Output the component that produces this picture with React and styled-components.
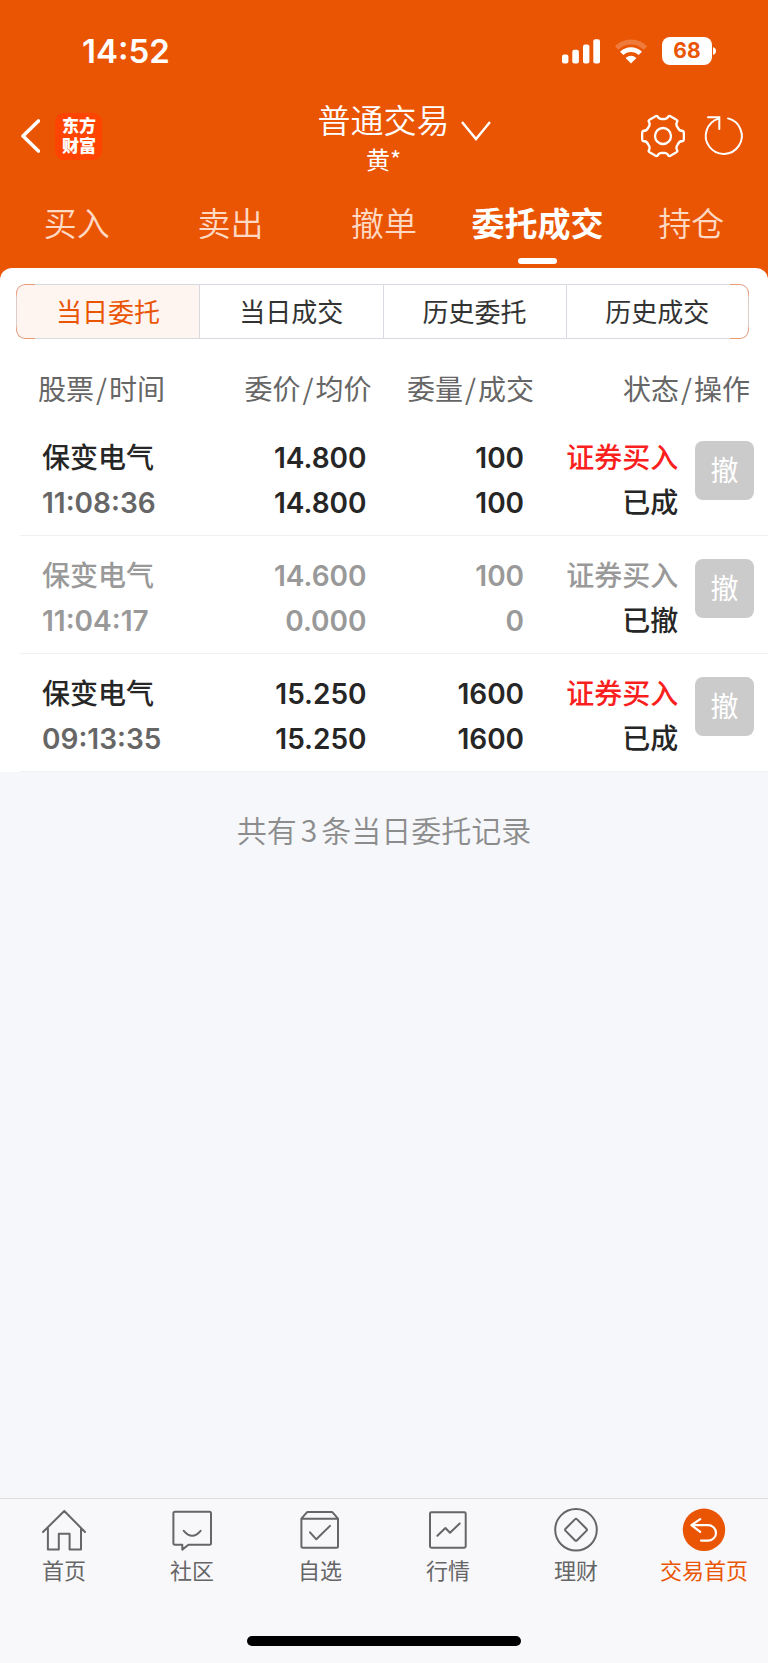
import React from "react";
import styled, { createGlobalStyle, css } from "styled-components";

const ORANGE = "#ea5504";
const cjk = `"Noto Sans CJK SC", sans-serif`;
const latin = `Inter, "Noto Sans CJK SC", sans-serif`;

const GlobalStyle = createGlobalStyle`
  *, *::before, *::after { box-sizing: border-box; }
  body { margin: 0; background: #f6f7fa; font-family: ${cjk}; color: #262626; }
  button { margin: 0; padding: 0; border: 0; background: none; font: inherit; color: inherit; cursor: pointer; }
  a { color: inherit; text-decoration: none; }
  svg { display: block; }
`;

const Screen = styled.div`
  min-height: 100vh;
  display: flex;
  flex-direction: column;
`;

const Header = styled.header`
  background: ${ORANGE};
  color: #fff;
`;

const StatusBar = styled.div`
  height: 94px;
  padding: 8px 52px 0 82px;
  display: flex;
  align-items: center;
  justify-content: space-between;
`;

const Clock = styled.time`
  font: 600 33px/40px ${latin};
`;

const StatusIcons = styled.div`
  display: flex;
  align-items: center;
  gap: 14px;
`;

const Battery = styled.div`
  display: flex;
  align-items: center;
  gap: 1px;
`;

const BatteryLevel = styled.span`
  width: 50px;
  height: 28px;
  border-radius: 8px;
  background: #fff;
  color: ${ORANGE};
  font: 700 21px/28px ${latin};
  text-align: center;
`;

const TitleBar = styled.div`
  height: 84px;
  padding: 0 22px 0 21px;
  display: grid;
  grid-template-columns: 1fr auto 1fr;
  align-items: center;
`;

const BarSide = styled.div`
  display: flex;
  align-items: center;
  justify-content: ${(p) => (p.$end ? "flex-end" : "flex-start")};
  gap: 15px;
`;

const Logo = styled.span`
  width: 47px;
  height: 47px;
  padding: 2px 6px 0 7px;
  border-radius: 9px;
  background: #ff4400;
  text-align: center;
  font: 900 17px/20px ${cjk};
`;

const Account = styled.button`
  position: relative;
  align-self: start;
  display: flex;
  flex-direction: column;
  align-items: center;
  padding-top: 3px;
`;

const AccountTitle = styled.span`
  font: 350 33px/44px ${cjk};
`;

const AccountName = styled.span`
  font: 400 24px/36px ${cjk};
`;

const Chevron = styled.svg`
  position: absolute;
  left: 100%;
  top: 26px;
  margin-left: 10px;
`;

const Tabs = styled.nav`
  display: grid;
  grid-template-columns: repeat(5, 1fr);
  padding: 22px 0 4px;
`;

const Tab = styled.a`
  display: flex;
  flex-direction: column;
  align-items: center;
  gap: 14px;
  font-size: 33px;
  line-height: 44px;
  font-weight: 350;
  color: #ffd9c4;
  &::after {
    content: "";
    width: 39px;
    height: 6px;
    border-radius: 3px;
  }
  ${(p) =>
    p.$active &&
    css`
      font-weight: 700;
      color: #fff;
      &::after { background: #fff; }
    `}
`;

const PanelBacking = styled.div`
  background: linear-gradient(${ORANGE} 24px, #fff 24px);
`;

const Panel = styled.section`
  background: #fff;
  border-radius: 12px 12px 0 0;
  padding-top: 16px;
`;

const Segments = styled.div`
  margin: 0 19px 0 16px;
  height: 55px;
  display: grid;
  grid-template-columns: repeat(4, 1fr);
`;

/* The orange tint shows only on the rounded outer corners of the group. */
const cornerTint = css`
  content: "";
  position: absolute;
  top: -1px;
  bottom: -1px;
  width: 19px;
  border: 1px solid #ee9a72;
  mask-image: linear-gradient(#000 9px, rgba(0, 0, 0, 0.2) 14px, rgba(0, 0, 0, 0.2) calc(100% - 14px), #000 calc(100% - 9px));
`;

const Segment = styled.button`
  position: relative;
  border: 1px solid #d8dae2;
  border-right-width: 0;
  padding-bottom: 3px;
  background: ${(p) => (p.$active ? "#fef5f1" : "#fff")};
  color: ${(p) => (p.$active ? ORANGE : "#333")};
  font-size: 26px;
  &:first-child { border-radius: 9px 0 0 9px; }
  &:first-child::before {
    ${cornerTint}
    left: -1px;
    border-right: 0;
    border-radius: 9px 0 0 9px;
  }
  &:last-child {
    border-right-width: 1px;
    border-radius: 0 9px 9px 0;
  }
  &:last-child::after {
    ${cornerTint}
    right: -1px;
    border-left: 0;
    border-radius: 0 9px 9px 0;
  }
`;

const TableWrap = styled.div`
  padding-left: 20px;
`;

const Orders = styled.table`
  width: 100%;
  table-layout: fixed;
  border-collapse: separate;
  border-spacing: 0;
`;

const Col = styled.col`
  width: ${(p) => p.$w};
`;

const Head = styled.th`
  padding: 29px ${(p) => p.$right || 0}px 10px ${(p) => p.$left || 0}px;
  text-align: ${(p) => (p.$left ? "left" : "right")};
  font-size: 28px;
  line-height: 40px;
  font-weight: 400;
  color: #666;
  white-space: nowrap;
`;

const Slash = styled.span`
  margin: 0 2px;
`;

const Cell = styled.td`
  padding: 17px ${(p) => p.$right || 0}px 10px ${(p) => p.$left || 0}px;
  border-bottom: 1px solid #f1f1f2;
  text-align: ${(p) => (p.$left ? "left" : "right")};
  vertical-align: top;
  white-space: nowrap;
`;

const tones = { dark: "#262626", mid: "#666", muted: "#999", red: "#fa1e1e" };

const Line = styled.div`
  height: 45px;
  font: ${(p) => (p.$number ? `600 28px/47px ${latin}` : `500 28px/42px ${cjk}`)};
  color: ${(p) => tones[p.$tone]};
`;

const CancelButton = styled.button`
  width: 59px;
  height: 59px;
  margin-top: 6px;
  padding-bottom: 4px;
  border-radius: 8px;
  background: #cbcbcb;
  color: #fff;
  font-size: 28px;
`;

const Summary = styled.p`
  margin: 0;
  padding-top: 33px;
  text-align: center;
  font-size: 30px;
  line-height: 48px;
  font-weight: 350;
  color: #8c8c8c;
`;

const Count = styled.span`
  margin: 0 4px;
`;

const Footer = styled.footer`
  margin-top: auto;
  border-top: 1px solid #dededf;
  background: #f8f8fb;
  padding: 9px 0 17px;
`;

const BottomNav = styled.nav`
  display: grid;
  grid-template-columns: repeat(6, 1fr);
`;

const NavItem = styled.a`
  display: flex;
  flex-direction: column;
  align-items: center;
  gap: 2px;
  font-size: 22px;
  line-height: 30px;
  color: ${(p) => (p.$active ? ORANGE : "#666")};
`;

const HomeIndicator = styled.div`
  width: 274px;
  height: 10px;
  margin: 52px auto 0;
  border-radius: 5px;
  background: #000;
`;

/* Six-toothed outline: each tooth is a short edge, joined by a curved dip. */
const gearPath = (() => {
  const at = (deg, r) => {
    const a = (deg * Math.PI) / 180;
    return `${(24 + r * Math.cos(a)).toFixed(2)} ${(24 + r * Math.sin(a)).toFixed(2)}`;
  };
  let d = `M${at(-14, 20.8)}`;
  for (let k = 0; k < 6; k += 1) {
    const c = k * 60;
    d += `Q${at(c - 11, 21.4)} ${at(c - 7, 21)}L${at(c + 7, 21)}Q${at(c + 11, 21.4)} ${at(c + 14, 20.8)}`;
    d += `C${at(c + 16, 17.6)} ${at(c + 23, 16.8)} ${at(c + 30, 17)}`;
    d += `C${at(c + 37, 16.8)} ${at(c + 44, 17.6)} ${at(c + 46, 20.8)}`;
  }
  return `${d}Z`;
})();

const Signal = () => (
  <svg width="38" height="25" viewBox="0 0 38 25" fill="#fff" aria-hidden="true">
    <rect x="0" y="15.5" width="6.4" height="9" rx="2" />
    <rect x="10.3" y="10.8" width="6.6" height="13.7" rx="2" />
    <rect x="21" y="5.5" width="6.4" height="19" rx="2" />
    <rect x="31.3" y="0.3" width="6.7" height="24.2" rx="2" />
  </svg>
);

const Wifi = () => (
  <svg width="34" height="25" viewBox="0 0 34 25" aria-hidden="true">
    <path d="M2.6 9A20.5 20.5 0 0 1 31.4 9" fill="none" stroke="#fff" strokeOpacity=".22" strokeWidth="5" />
    <path d="M7.7 14.4A13.2 13.2 0 0 1 26.3 14.4" fill="none" stroke="#fff" strokeWidth="4.8" />
    <path d="M17 24.4L11.6 19Q17 14.4 22.4 19Z" fill="#fff" />
  </svg>
);

const Icon = ({ children, size = 44, width = 2 }) => (
  <svg
    width={size}
    height={size}
    viewBox={`0 0 ${size} ${size}`}
    fill="none"
    stroke="currentColor"
    strokeWidth={width}
    strokeLinecap="round"
    strokeLinejoin="round"
    aria-hidden="true"
  >
    {children}
  </svg>
);

const navItems = [
  {
    label: "首页",
    icon: (
      <path d="M1 24L22.3 3L43 24M5.9 20V41.5H16.8V25.7H27.6V41.5H39V20" />
    ),
  },
  {
    label: "社区",
    icon: (
      <path d="M5 3.7H39.5Q41 3.7 41 5.2V35.2Q41 36.7 39.5 36.7H18.4L12.3 41.6V36.7H5Q3.4 36.7 3.4 35.2V5.2Q3.4 3.7 5 3.7ZM13.8 22.8Q22.2 32.8 30.6 22.8" />
    ),
  },
  {
    label: "自选",
    icon: (
      <path d="M3.4 10.7L8.4 4.9Q9 4.1 10 4.1H33.4Q34.4 4.1 35 4.9L40 10.7V38.2Q40 39.7 38.5 39.7H5Q3.4 39.7 3.4 38.2ZM3.4 10.7H40M12 24.3L18.3 31.3L32 17.9" />
    ),
  },
  {
    label: "行情",
    icon: (
      <>
        <rect x="4" y="4.2" width="35.7" height="35.5" rx="1.4" />
        <path d="M11.4 27.8L19.4 20L24 24.7L33.7 15.5" />
      </>
    ),
  },
  {
    label: "理财",
    icon: (
      <>
        <circle cx="22" cy="21.8" r="20.8" />
        <path d="M20.9 11.4Q22 10.3 23.1 11.4L32.4 20.7Q33.5 21.8 32.4 22.9L23.1 32.2Q22 33.3 20.9 32.2L11.6 22.9Q10.5 21.8 11.6 20.7Z" />
      </>
    ),
  },
  {
    label: "交易首页",
    active: true,
    icon: (
      <>
        <circle cx="22" cy="21.8" r="21.2" fill={ORANGE} stroke="none" />
        <path d="M18.2 11.2L9.4 17.2L18.2 23.8M9.6 17.2H26.3A7.7 7.7 0 0 1 26.3 32.6H19" stroke="#fff" strokeWidth="2.2" />
      </>
    ),
  },
];

const tabs = ["买入", "卖出", "撤单", "委托成交", "持仓"];
const segments = ["当日委托", "当日成交", "历史委托", "历史成交"];
const orders = [
  { name: "保变电气", time: "11:08:36", price: "14.800", avg: "14.800", qty: "100", filled: "100", side: "证券买入", state: "已成" },
  { name: "保变电气", time: "11:04:17", price: "14.600", avg: "0.000", qty: "100", filled: "0", side: "证券买入", state: "已撤", cancelled: true },
  { name: "保变电气", time: "09:13:35", price: "15.250", avg: "15.250", qty: "1600", filled: "1600", side: "证券买入", state: "已成" },
];

const OrderRow = ({ order }) => {
  const tone = order.cancelled ? "muted" : "dark";
  return (
    <tr>
      <Cell $left={22}>
        <Line $tone={tone}>{order.name}</Line>
        <Line $number $tone={order.cancelled ? "muted" : "mid"}>{order.time}</Line>
      </Cell>
      <Cell $right={5}>
        <Line $number $tone={tone}>{order.price}</Line>
        <Line $number $tone={tone}>{order.avg}</Line>
      </Cell>
      <Cell $right={12}>
        <Line $number $tone={tone}>{order.qty}</Line>
        <Line $number $tone={tone}>{order.filled}</Line>
      </Cell>
      <Cell>
        <Line $tone={order.cancelled ? "muted" : "red"}>{order.side}</Line>
        <Line $tone="dark">{order.state}</Line>
      </Cell>
      <Cell $right={14}>
        <CancelButton type="button">撤</CancelButton>
      </Cell>
    </tr>
  );
};

export default function App() {
  return (
    <Screen>
      <GlobalStyle />
      <Header>
        <StatusBar>
          <Clock>14:52</Clock>
          <StatusIcons>
            <Signal />
            <Wifi />
            <Battery>
              <BatteryLevel>68</BatteryLevel>
              <svg width="3" height="8" viewBox="0 0 3 8" aria-hidden="true">
                <path d="M0 0Q3 1.2 3 4T0 8Z" fill="#fff" />
              </svg>
            </Battery>
          </StatusIcons>
        </StatusBar>
        <TitleBar>
          <BarSide>
            <button type="button" aria-label="返回">
              <svg width="19" height="34" viewBox="0 0 19 34" fill="none" stroke="#fff" strokeWidth="3.6" strokeLinecap="round" strokeLinejoin="round">
                <path d="M17.4 2L2 17L17.4 32" />
              </svg>
            </button>
            <Logo>东方财富</Logo>
          </BarSide>
          <Account type="button">
            <AccountTitle>普通交易</AccountTitle>
            <AccountName>黄*</AccountName>
            <Chevron width="32" height="22" viewBox="0 0 32 22" fill="none" stroke="#fff" strokeWidth="2.4" aria-hidden="true">
              <path d="M2 2L16 19L30 2" />
            </Chevron>
          </Account>
          <BarSide $end>
            <button type="button" aria-label="设置">
              <Icon size={48} width={2.3}>
                <path d={gearPath} />
                <circle cx="24" cy="24" r="8" />
              </Icon>
            </button>
            <button type="button" aria-label="刷新">
              <Icon>
                <path d="M26 4.4A18 18 0 1 1 16.8 4.6M6 3.2H17.3V15" strokeLinejoin="miter" />
              </Icon>
            </button>
          </BarSide>
        </TitleBar>
        <Tabs>
          {tabs.map((t) => (
            <Tab key={t} href="#" $active={t === "委托成交"}>{t}</Tab>
          ))}
        </Tabs>
      </Header>
      <main>
        <PanelBacking>
          <Panel>
            <Segments>
              {segments.map((s, i) => (
                <Segment key={s} type="button" $active={i === 0}>{s}</Segment>
              ))}
            </Segments>
            <TableWrap>
              <Orders>
                <colgroup>
                  <Col $w="28%" />
                  <Col $w="19%" />
                  <Col $w="22%" />
                  <Col $w="19%" />
                  <Col $w="12%" />
                </colgroup>
                <thead>
                  <tr>
                    <Head scope="col" $left={18}>股票<Slash>/</Slash>时间</Head>
                    <Head scope="col">委价<Slash>/</Slash>均价</Head>
                    <Head scope="col" $right={2}>委量<Slash>/</Slash>成交</Head>
                    <Head scope="col" colSpan={2} $right={18}>状态<Slash>/</Slash>操作</Head>
                  </tr>
                </thead>
                <tbody>
                  {orders.map((o) => (
                    <OrderRow key={o.time} order={o} />
                  ))}
                </tbody>
              </Orders>
            </TableWrap>
          </Panel>
        </PanelBacking>
        <Summary>共有<Count>3</Count>条当日委托记录</Summary>
      </main>
      <Footer>
        <BottomNav>
          {navItems.map((n) => (
            <NavItem key={n.label} href="#" $active={n.active}>
              <Icon>{n.icon}</Icon>
              {n.label}
            </NavItem>
          ))}
        </BottomNav>
        <HomeIndicator />
      </Footer>
    </Screen>
  );
}
